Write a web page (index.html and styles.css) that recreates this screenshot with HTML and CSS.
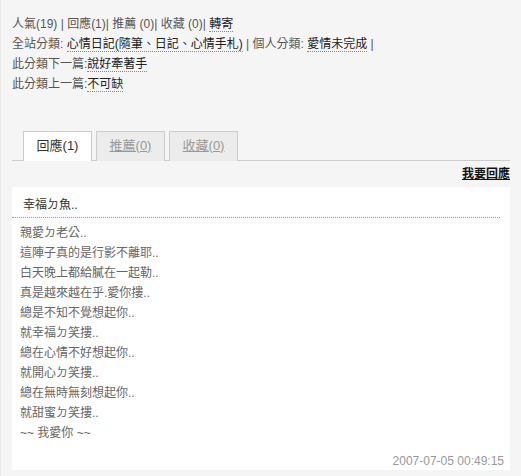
FILE: index.html
```html
<!DOCTYPE html>
<html lang="zh-Hant">
<head>
    <meta charset="UTF-8">
    <title>回應</title>
    <link rel="stylesheet" href="styles.css">
</head>
<body>
    <div class="page">
        <div class="info">
            <p>人氣(19) | 回應(1)| 推薦 (0)| 收藏 (0)| <a href="#">轉寄</a></p>
            <p>全站分類: <a href="#">心情日記(隨筆、日記、心情手札)</a> | 個人分類: <a href="#">愛情未完成</a> |</p>
            <p>此分類下一篇:<a href="#">說好牽著手</a></p>
            <p>此分類上一篇:<a href="#">不可缺</a></p>
        </div>

        <!-- tabs -->
        <ul class="tabs">
            <li class="tab active">回應(1)</li>
            <li class="tab"><a href="#">推薦(0)</a></li>
            <li class="tab"><a href="#">收藏(0)</a></li>
        </ul>

        <div class="reply-link"><a href="#">我要回應</a></div>

        <div class="reply">
            <div class="reply-title">幸福ㄉ魚..</div>
            <div class="reply-body">
                <p>親愛ㄉ老公..</p>
                <p>這陣子真的是行影不離耶..</p>
                <p>白天晚上都給膩在一起勒..</p>
                <p>真是越來越在乎.愛你摟..</p>
                <p>總是不知不覺想起你..</p>
                <p>就幸福ㄉ笑摟..</p>
                <p>總在心情不好想起你..</p>
                <p>就開心ㄉ笑摟..</p>
                <p>總在無時無刻想起你..</p>
                <p>就甜蜜ㄉ笑摟..</p>
                <p>~~ 我愛你 ~~</p>
            </div>
            <div class="reply-date">2007-07-05 00:49:15</div>
        </div>
    </div>
</body>
</html>
```

FILE: styles.css
```css
*{
    padding: 0;
    margin: 0;
    box-sizing: border-box;
}

body{
    background-color: #f5f5f5;
    font-family: "Liberation Sans", "Noto Sans CJK TC", sans-serif;
    font-size: 12px;
    color: #555;
    border-left: 1px solid #ebebeb;
    height: 476px;
    overflow: hidden;
}

.page{
    width: 498px;
    margin-left: 11px;
    padding-top: 14px;
}

.info p{
    line-height: 20px;
}

.info a{
    color: #222;
    text-decoration: none;
    border-bottom: 1px dotted #888;
}

.tabs{
    list-style: none;
    display: flex;
    gap: 4px;
    margin-top: 37px;
    padding-left: 11px;
    border-bottom: 1px solid #ccc;
    height: 30px;
}

.tab{
    width: 69px;
    height: 30px;
    border: 1px solid #ccc;
    border-bottom: none;
    background-color: #ececec;
    text-align: center;
    line-height: 28px;
    font-size: 13px;
}

.tab a{
    color: #999;
}

.tab.active{
    background-color: #fff;
    color: #333;
}

.reply-link{
    text-align: right;
    line-height: 26px;
    font-weight: bold;
}

.reply-link a{
    color: #111;
}

.reply{
    background-color: #fff;
    height: 283px;
    padding-top: 8px;
}

.reply-title{
    color: #333;
    line-height: 20px;
    padding: 0 0 2px 11px;
    margin-right: 10px;
    border-bottom: 1px dotted #999;
}

.reply-body{
    padding: 5px 0 0 8px;
    color: #666;
}

.reply-body p{
    line-height: 20px;
}

.reply-date{
    text-align: right;
    color: #999;
    padding-right: 6px;
    margin-top: 11px;
}
```
